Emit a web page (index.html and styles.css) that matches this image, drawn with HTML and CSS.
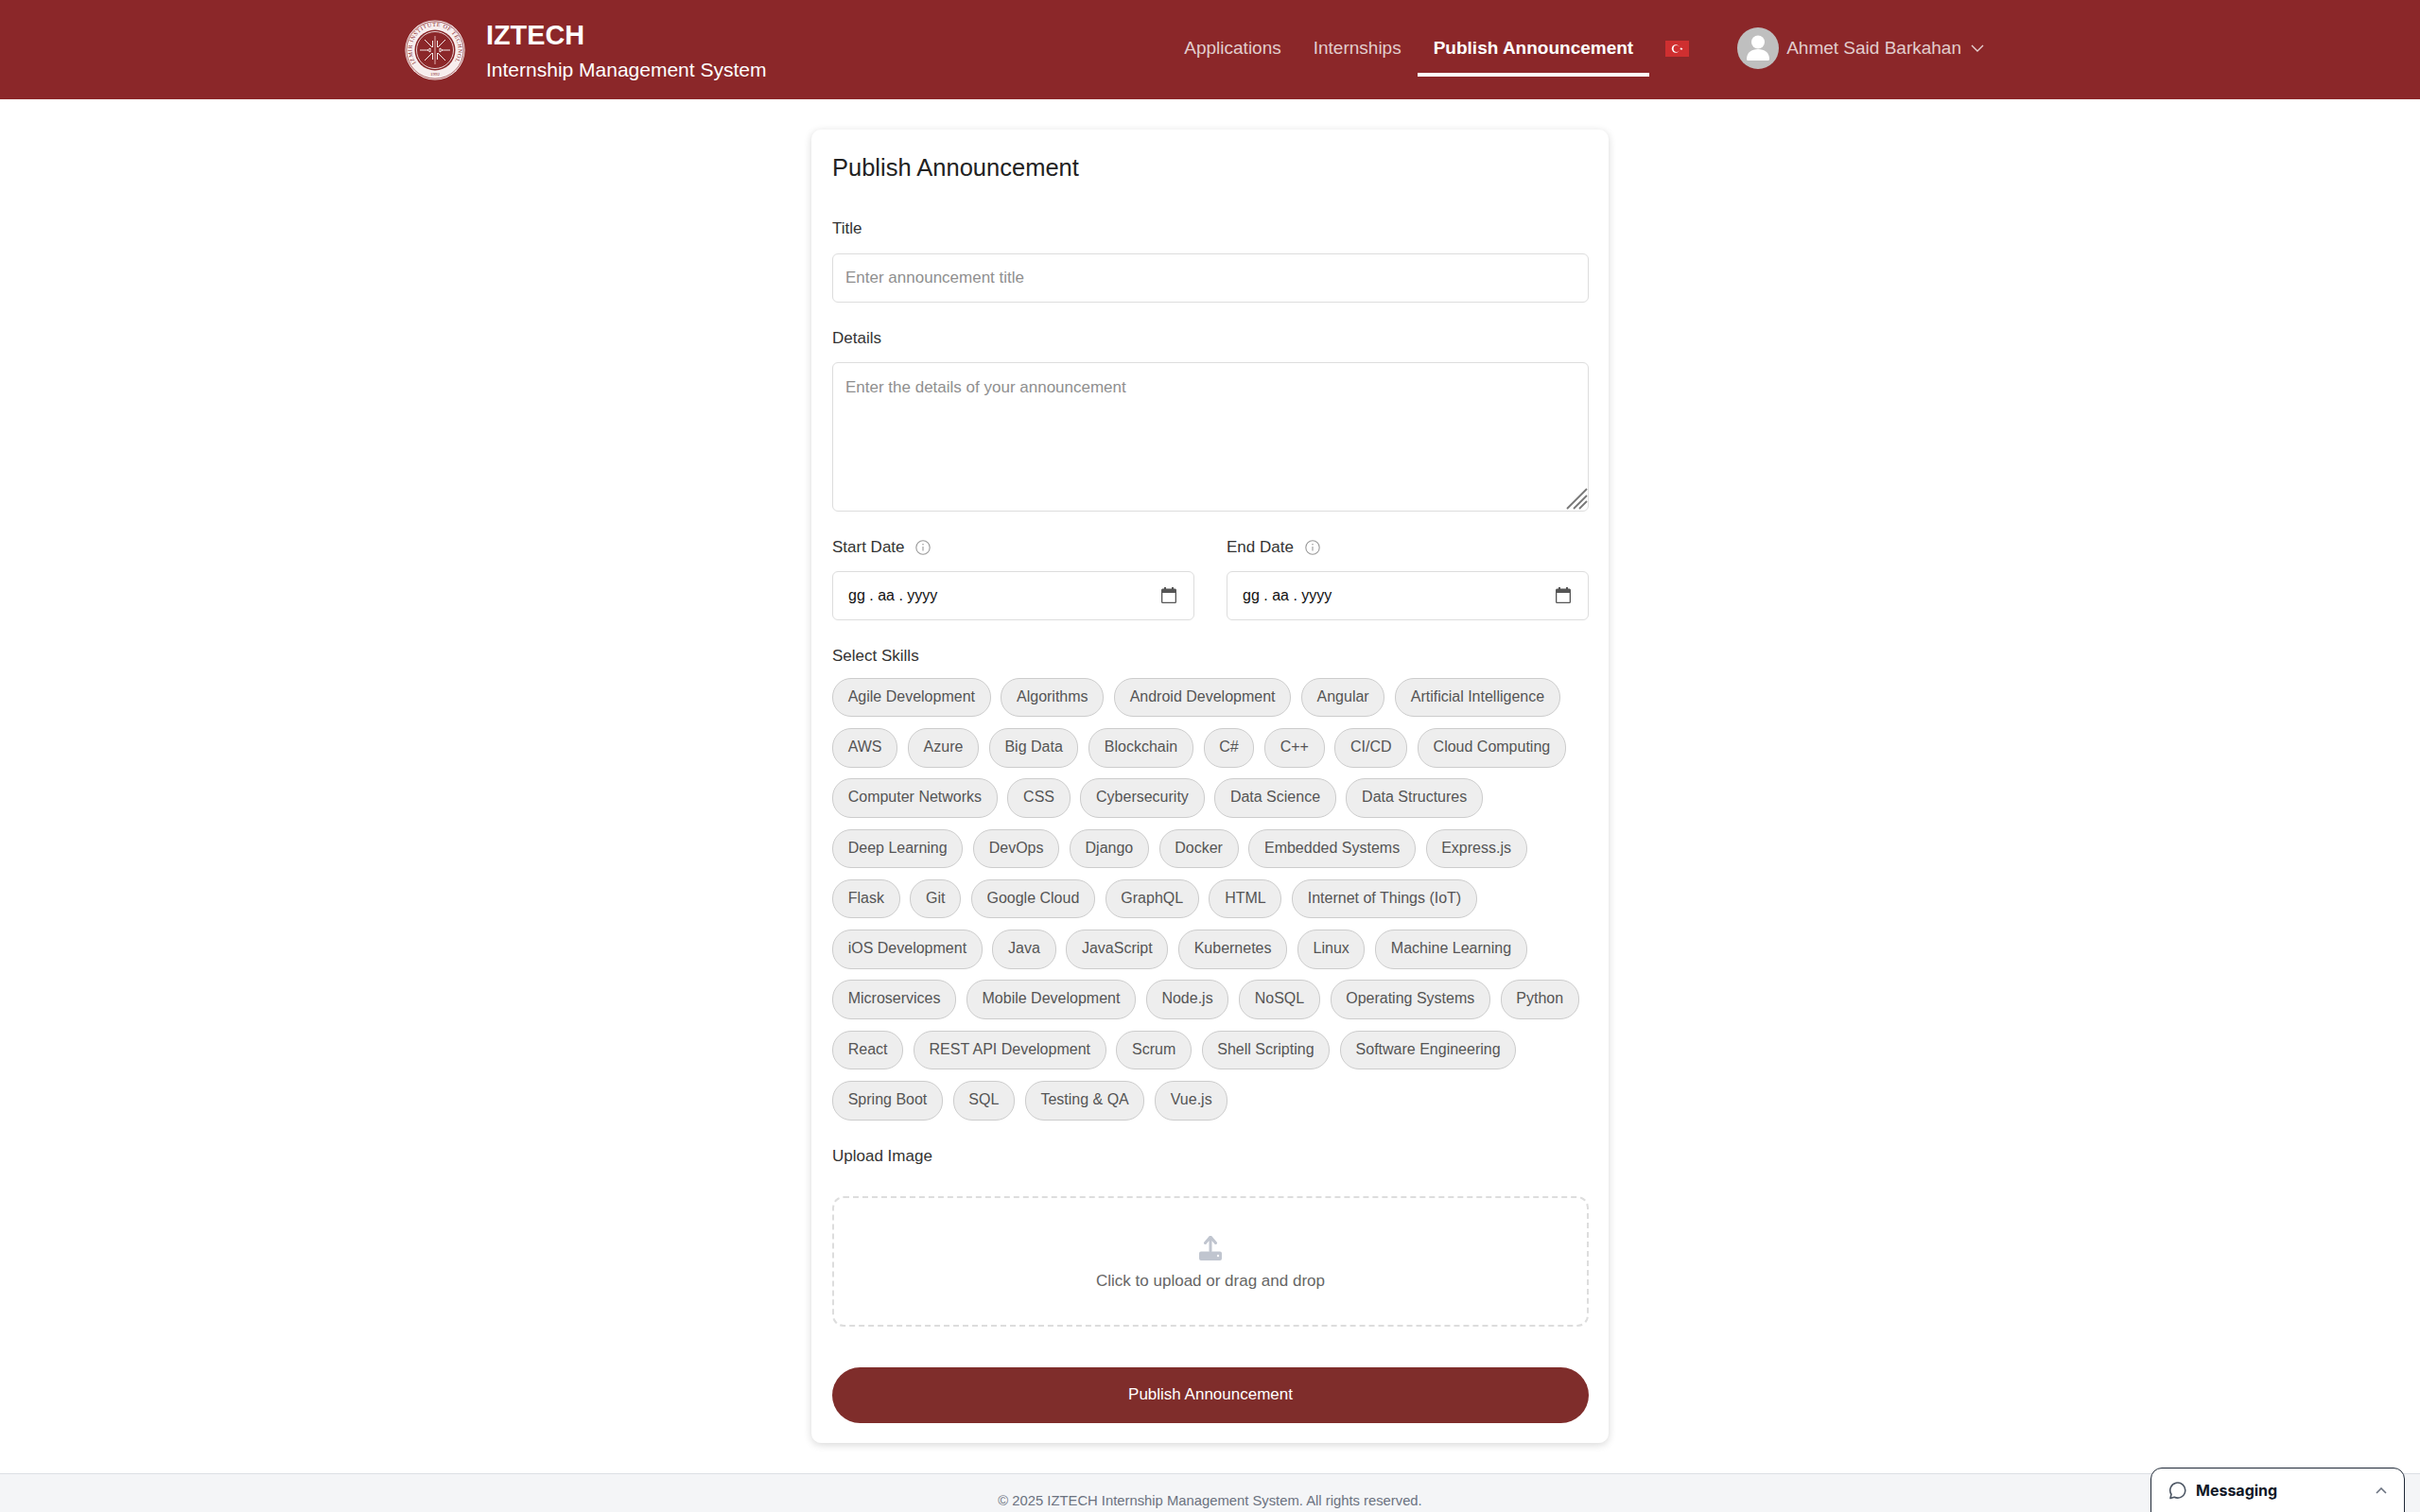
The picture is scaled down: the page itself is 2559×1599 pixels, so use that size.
FILE: index.html
```html
<!DOCTYPE html>
<html lang="en">
<head>
<meta charset="utf-8">
<title>Publish Announcement</title>
<link rel="stylesheet" href="styles.css">
</head>
<body>
<header class="topbar">
  <div class="brand">
    <svg class="seal" viewBox="0 0 64 64" aria-hidden="true">
      <circle cx="32" cy="32" r="31.600" fill="#f7eeee"/>
      <circle cx="32" cy="32" r="30.200" fill="none" stroke="#8b2729" stroke-width=".7"/>
      <circle cx="32" cy="32" r="21.500" fill="#8b2729"/>
      <circle cx="32" cy="32" r="19.500" fill="none" stroke="#fff" stroke-width=".8"/>
      <defs><path id="ring" d="M12 45.500A24.500 24.500 0 1 1 52 45.500"/></defs>
      <text class="seal-text"><textPath href="#ring">IZMIR INSTITUTE OF TECHNOLOGY</textPath></text>
      <text class="seal-year" x="32" y="59" text-anchor="middle">1992</text>
      <g stroke="#fff" stroke-width=".9" fill="none">
        <path d="M32 17V47" stroke="#c98a8a" stroke-width="1.400"/>
        <path d="M21 21l8 8M43 21l-8 8M21 43l8-8M43 43l-8-8"/>
        <path d="M16 32h8l3-2v4l-3-2M48 32h-8l-3-2v4l3-2"/>
        <path d="M29.500 22v7M34.500 22v7M29.500 35v7M34.500 35v7"/>
      </g>
    </svg>
    <div class="brand-text">
      <div class="brand-name">IZTECH</div>
      <div class="brand-sub">Internship Management System</div>
    </div>
  </div>
  <nav class="nav">
    <a class="nav-link">Applications</a>
    <a class="nav-link">Internships</a>
    <a class="nav-link nav-active">Publish Announcement</a>
    <svg class="flag" viewBox="0 0 25 17" aria-hidden="true">
      <rect width="25" height="17" fill="#cf2f30"/>
      <circle cx="11" cy="8.500" r="4.200" fill="#fff"/>
      <circle cx="12" cy="8.500" r="3.400" fill="#cf2f30"/>
      <path d="M16.800 6.800l.5 1.200 1.300 0-1 .8.4 1.300-1.200-.8-1 .8.400-1.300-1-.8 1.300 0z" fill="#fff"/>
    </svg>
    <div class="user">
      <svg class="avatar" viewBox="0 0 44 44" aria-hidden="true">
        <circle cx="22" cy="22" r="22" fill="#bfbfbf"/>
        <circle cx="22" cy="15.500" r="7" fill="#fff"/>
        <path d="M10 33.500c0-7 5-10.500 12-10.500s12 3.500 12 10.500c0 1-.8 1.500-2 1.500H12c-1.200 0-2-.5-2-1.500z" fill="#fff"/>
      </svg>
      <span class="user-name">Ahmet Said Barkahan</span>
      <svg class="chev" viewBox="0 0 14 8" aria-hidden="true"><path d="M1 1l6 6 6-6" fill="none" stroke="#e6d4d4" stroke-width="1.400"/></svg>
    </div>
  </nav>
</header>

<main class="main">
  <form class="card">
    <h2 class="card-title">Publish Announcement</h2>

    <label class="label label-first">Title</label>
    <input class="field" type="text" placeholder="Enter announcement title">

    <label class="label">Details</label>
    <div class="area-wrap">
      <textarea class="field field-area" placeholder="Enter the details of your announcement"></textarea>
      <svg class="grip" viewBox="0 0 24 24" aria-hidden="true"><path d="M2 23L23 2M9 23L23 9M15 23l8-8" fill="none" stroke="#777" stroke-width="1.800"/></svg>
    </div>

    <div class="dates">
      <div class="date-col">
        <label class="label">Start Date
          <svg class="info" viewBox="0 0 16 16" aria-hidden="true"><circle cx="8" cy="8" r="7.200" fill="none" stroke="#999" stroke-width="1.100"/><path d="M8 7v4.500" stroke="#999" stroke-width="1.100"/><circle cx="8" cy="4.800" r=".8" fill="#999"/></svg>
        </label>
        <div class="field date-field"><span>gg . aa . yyyy</span>
          <svg class="cal" viewBox="0 0 16 17" aria-hidden="true"><path d="M3 0h2v1.500h6V0h2v1.500h1.500A1.500 1.500 0 0 1 16 3v12.500a1.500 1.500 0 0 1-1.500 1.500h-13A1.500 1.500 0 0 1 0 15.500V3A1.500 1.500 0 0 1 1.500 1.500H3zM1.300 6v9.700h13.400V6z" fill="#555"/></svg>
        </div>
      </div>
      <div class="date-col">
        <label class="label">End Date
          <svg class="info" viewBox="0 0 16 16" aria-hidden="true"><circle cx="8" cy="8" r="7.200" fill="none" stroke="#999" stroke-width="1.100"/><path d="M8 7v4.500" stroke="#999" stroke-width="1.100"/><circle cx="8" cy="4.800" r=".8" fill="#999"/></svg>
        </label>
        <div class="field date-field"><span>gg . aa . yyyy</span>
          <svg class="cal" viewBox="0 0 16 17" aria-hidden="true"><path d="M3 0h2v1.500h6V0h2v1.500h1.500A1.500 1.500 0 0 1 16 3v12.500a1.500 1.500 0 0 1-1.500 1.500h-13A1.500 1.500 0 0 1 0 15.500V3A1.500 1.500 0 0 1 1.500 1.500H3zM1.300 6v9.700h13.400V6z" fill="#555"/></svg>
        </div>
      </div>
    </div>

    <label class="label">Select Skills</label>
    <div class="skills">
      <span class="pill">Agile Development</span><span class="pill">Algorithms</span><span class="pill">Android Development</span><span class="pill">Angular</span><span class="pill">Artificial Intelligence</span>
      <span class="pill">AWS</span><span class="pill">Azure</span><span class="pill">Big Data</span><span class="pill">Blockchain</span><span class="pill">C#</span><span class="pill">C++</span><span class="pill">CI/CD</span><span class="pill">Cloud Computing</span>
      <span class="pill">Computer Networks</span><span class="pill">CSS</span><span class="pill">Cybersecurity</span><span class="pill">Data Science</span><span class="pill">Data Structures</span>
      <span class="pill">Deep Learning</span><span class="pill">DevOps</span><span class="pill">Django</span><span class="pill">Docker</span><span class="pill">Embedded Systems</span><span class="pill">Express.js</span>
      <span class="pill">Flask</span><span class="pill">Git</span><span class="pill">Google Cloud</span><span class="pill">GraphQL</span><span class="pill">HTML</span><span class="pill">Internet of Things (IoT)</span>
      <span class="pill">iOS Development</span><span class="pill">Java</span><span class="pill">JavaScript</span><span class="pill">Kubernetes</span><span class="pill">Linux</span><span class="pill">Machine Learning</span>
      <span class="pill">Microservices</span><span class="pill">Mobile Development</span><span class="pill">Node.js</span><span class="pill">NoSQL</span><span class="pill">Operating Systems</span><span class="pill">Python</span>
      <span class="pill">React</span><span class="pill">REST API Development</span><span class="pill">Scrum</span><span class="pill">Shell Scripting</span><span class="pill">Software Engineering</span>
      <span class="pill">Spring Boot</span><span class="pill">SQL</span><span class="pill">Testing &amp; QA</span><span class="pill">Vue.js</span>
    </div>

    <label class="label label-upload">Upload Image</label>
    <div class="drop">
      <svg class="upload-icon" viewBox="0 0 24 26" aria-hidden="true">
        <path d="M12 1L6.500 7.500M12 1l5.500 6.500M12 1v15" fill="none" stroke="#c0c5cf" stroke-width="3" stroke-linecap="round"/>
        <path d="M2 16.500h20a2 2 0 0 1 2 2V24a2 2 0 0 1-2 2H2a2 2 0 0 1-2-2v-5.500a2 2 0 0 1 2-2z" fill="#c0c5cf"/>
        <circle cx="20" cy="21" r="1.200" fill="#fff"/>
      </svg>
      <div class="drop-text">Click to upload or drag and drop</div>
    </div>

    <button class="submit" type="button">Publish Announcement</button>
  </form>
</main>

<footer class="footer">© 2025 IZTECH Internship Management System. All rights reserved.</footer>

<aside class="messaging">
  <svg class="msg-icon" viewBox="0 0 20 20" aria-hidden="true"><path d="M2 18.500l1-4.200A8 8 0 1 1 6.200 17.200z" fill="none" stroke="#4b5563" stroke-width="1.600" stroke-linejoin="round"/></svg>
  <span class="msg-title">Messaging</span>
  <svg class="msg-chev" viewBox="0 0 12 7" aria-hidden="true"><path d="M1 6l5-5 5 5" fill="none" stroke="#6b7280" stroke-width="1.600"/></svg>
</aside>
</body>
</html>
```

FILE: styles.css
```css
* { box-sizing: border-box; }
html, body { margin: 0; padding: 0; height: 100%; overflow: hidden; }
body { font-family: "Liberation Sans", Arial, sans-serif; font-size: 16px; color: #222; background: #fff; }

.topbar { height: 105px; background: #8b2729; display: flex; align-items: center; justify-content: space-between; padding: 0 461px 0 428px; }
.brand { display: flex; align-items: center; gap: 22px; }
.seal { width: 64px; height: 64px; display: block; }
.seal-text { font: 6.2px "Liberation Serif", serif; fill: #8b2729; letter-spacing: .55px; }
.seal-year { font: 5px "Liberation Serif", serif; fill: #8b2729; }
.brand-text { padding-top: 1px; }
.brand-name { font-size: 28.8px; font-weight: 700; color: #fff; line-height: 34px; }
.brand-sub { font-size: 21px; color: #fff; line-height: 26px; margin-top: 7px; }

.nav { display: flex; align-items: center; margin-top: -3px; }
.nav-link { font-size: 19px; color: #e2cdcd; padding: 18px 17px 14px; line-height: 24px; border-bottom: 4px solid transparent; }
.nav-active { color: #fff; font-weight: 700; border-bottom-color: #fff; }
.flag { width: 25px; height: 17px; margin-left: 17px; display: block; }
.user { display: flex; align-items: center; margin-left: 51px; }
.avatar { width: 44px; height: 44px; display: block; }
.user-name { font-size: 19px; color: #e2cdcd; margin-left: 8px; }
.chev { width: 14px; height: 8px; margin-left: 10px; display: block; }

.main { padding-top: 32px; display: flex; justify-content: center; }
.card { width: 843px; height: 1389px; padding: 22px 21px 22px 22px; background: #fff; border-radius: 10px; box-shadow: 0 2px 8px rgba(0,0,0,.16); }
.card-title { margin: 0; font-size: 25.5px; font-weight: 400; line-height: 37px; color: #222; }

.label { display: block; font-size: 17px; line-height: 20px; color: #333; margin: 28px 0 15.5px; }
.label-first { margin-top: 36px; }
.label-upload { margin: 28.5px 0 32.2px; }

.field { display: block; width: 100%; height: 52px; padding: 0 13px; border: 1.5px solid #ddd; border-radius: 6px; background: #fff; font: 17px "Liberation Sans", Arial, sans-serif; color: #222; outline: none; }
.field::placeholder { color: #8f8f8f; opacity: 1; }
.area-wrap { position: relative; }
.field-area { height: 157.5px; padding-top: 16px; resize: none; }
.grip { position: absolute; right: 1.5px; bottom: 1.5px; width: 24px; height: 24px; pointer-events: none; }

.dates { display: grid; grid-template-columns: 1fr 1fr; column-gap: 34px; }
.info { width: 16px; height: 16px; vertical-align: -3px; margin-left: 7px; }
.date-field { display: flex; align-items: center; justify-content: space-between; padding: 0 18px 0 16px; color: #111; font-size: 16px; }
.cal { width: 16px; height: 17px; display: block; margin-top: -1px; }

.skills { display: flex; flex-wrap: wrap; gap: 11.7px 10.67px; margin-top: -2.8px; }
.pill { height: 41.6px; line-height: 38.6px; padding: 0 15.7px; border: 1.5px solid #ccc; border-radius: 20px; background: #eee; color: #555; font-size: 16px; white-space: nowrap; }

.drop { height: 138px; border: 2px dashed #ddd; border-radius: 12px; display: flex; flex-direction: column; align-items: center; padding-top: 40px; }
.upload-icon { width: 24px; height: 26px; display: block; }
.drop-text { font-size: 17px; line-height: 20px; color: #666; margin-top: 12px; }

.submit { display: block; width: 100%; height: 59px; margin-top: 42.5px; border: 0; border-radius: 30px; background: #7f2d2b; color: #fff; font: 17px "Liberation Sans", Arial, sans-serif; }

.footer { margin-top: 32px; height: 60px; padding-top: 18px; border-top: 1.5px solid #dcdfe4; background: #f4f5f7; text-align: center; font-size: 14.8px; line-height: 20px; color: #6b7280; }

.messaging { position: fixed; right: 16px; bottom: -20px; width: 269px; height: 67px; padding: 13px 18px 0 18px; display: flex; align-items: flex-start; background: #fff; border: 1.5px solid #1f2937; border-radius: 12px 12px 0 0; }
.msg-icon { width: 20px; height: 20px; display: block; }
.msg-title { font-family: Inter, sans-serif; font-weight: 700; font-size: 16px; line-height: 20px; color: #111827; margin-left: 9px; flex: 1; }
.msg-chev { width: 12px; height: 7px; margin-top: 7px; display: block; }
```
